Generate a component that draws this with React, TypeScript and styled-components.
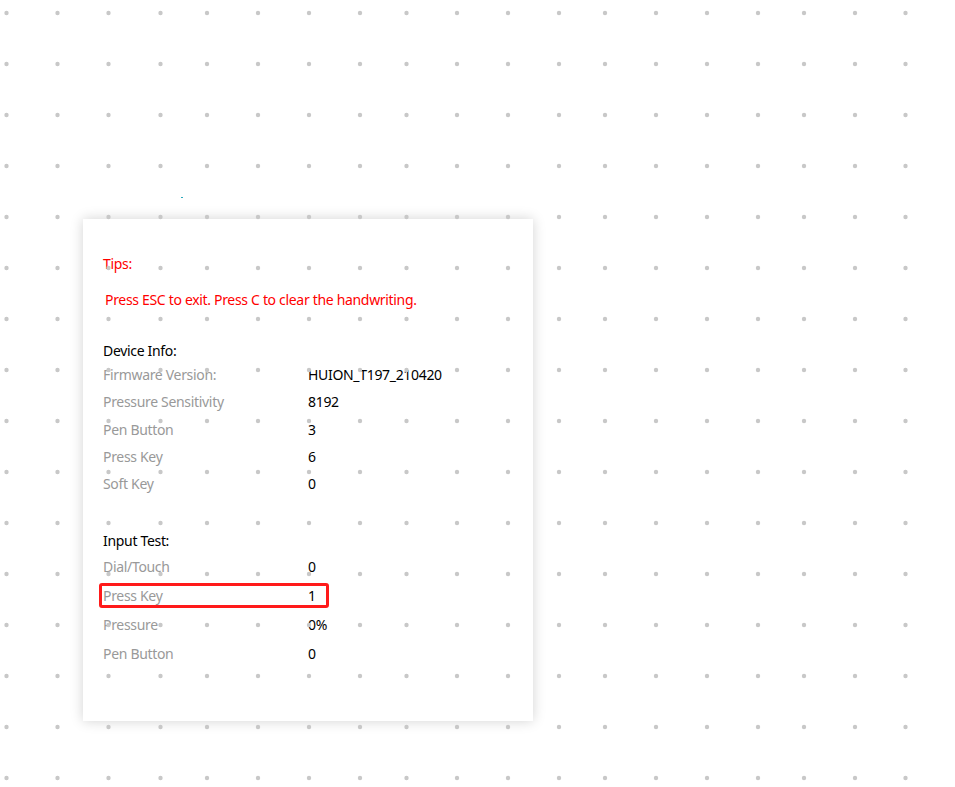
import * as React from 'react';
import styled, { createGlobalStyle } from 'styled-components';

const GlobalStyle = createGlobalStyle`
  html, body {
    margin: 0;
    padding: 0;
    background: #fff;
  }
  * { box-sizing: border-box; }
`;

const Page = styled.div`
  position: relative;
  width: 955px;
  height: 787px;
  overflow: hidden;
  padding: 219px 0 0 83px;
  font-family: "Noto Sans", "Open Sans", sans-serif;
  font-size: 14px;
  letter-spacing: -0.32px;
`;

const Panel = styled.div`
  width: 450px;
  height: 502px;
  background: #fff;
  box-shadow: 0 0 12px rgba(0, 0, 0, 0.18);
  padding: 35px 20px 0 20px;
`;

const TipTitle = styled.div`
  color: #ff0000;
  line-height: 20px;
`;

const TipText = styled.div`
  color: #ff0000;
  line-height: 20px;
  margin-top: 16px;
  padding-left: 2px;
`;

const SectionTitle = styled.div<{ $gap: number }>`
  color: #000;
  line-height: 20px;
  margin-top: ${p => p.$gap}px;
`;

const Row = styled.div<{ $h: number; $highlight?: boolean }>`
  display: grid;
  grid-template-columns: 205px 1fr;
  height: ${p => p.$h}px;
  line-height: ${p => p.$h}px;
  ${p => p.$highlight && `
    width: 230px;
    height: 25px;
    line-height: 19px;
    margin: 2px 0 2px -4px;
    padding: 0 1px;
    border: 3px solid #ff1a1a;
    border-radius: 3px;
  `}
`;

const Label = styled.span`
  color: #999;
  white-space: nowrap;
`;

const Value = styled.span`
  color: #000;
  white-space: nowrap;
`;

const DotLayer = styled.svg`
  position: absolute;
  left: 0;
  top: 0;
  pointer-events: none;
`;

const dotXs = [6.5, 57.5, 108.5, 160.5, 207, 258, 309, 360, 406.5, 457, 508, 559, 605, 656, 707, 758, 804, 855, 905.5];
const dotYs = Array.from({ length: 16 }, (_, i) => 13 + i * 51);

const deviceInfo: [string, string][] = [
  ['Firmware Version:', 'HUION_T197_210420'],
  ['Pressure Sensitivity', '8192'],
  ['Pen Button', '3'],
  ['Press Key', '6'],
  ['Soft Key', '0'],
];

const inputTest: [string, string][] = [
  ['Dial/Touch', '0'],
  ['Press Key', '1'],
  ['Pressure', '0%'],
  ['Pen Button', '0'],
];

export default function App() {
  return (
    <Page>
      <GlobalStyle />
      <Panel>
        <TipTitle>Tips:</TipTitle>
        <TipText>Press ESC to exit. Press C to clear the handwriting.</TipText>

        <SectionTitle $gap={31}>Device Info:</SectionTitle>
        {deviceInfo.map(([k, v]) => (
          <Row key={k} $h={27.3}>
            <Label>{k}</Label>
            <Value>{v}</Value>
          </Row>
        ))}

        <SectionTitle $gap={34}>Input Test:</SectionTitle>
        <div style={{ height: 1 }} />
        {inputTest.map(([k, v]) => (
          <Row key={k} $h={29} $highlight={k === 'Press Key'}>
            <Label>{k}</Label>
            <Value>{v}</Value>
          </Row>
        ))}
      </Panel>

      {/* handwriting canvas grid */}
      <DotLayer width={955} height={787} viewBox="0 0 955 787">
        {dotYs.map(y =>
          dotXs.map(x => <circle key={`${x}-${y}`} cx={x} cy={y} r={2.2} fill="#c8c8c8" />)
        )}
        <rect x={181} y={197} width={2} height={1} fill="#2aa9bd" />
      </DotLayer>
    </Page>
  );
}
